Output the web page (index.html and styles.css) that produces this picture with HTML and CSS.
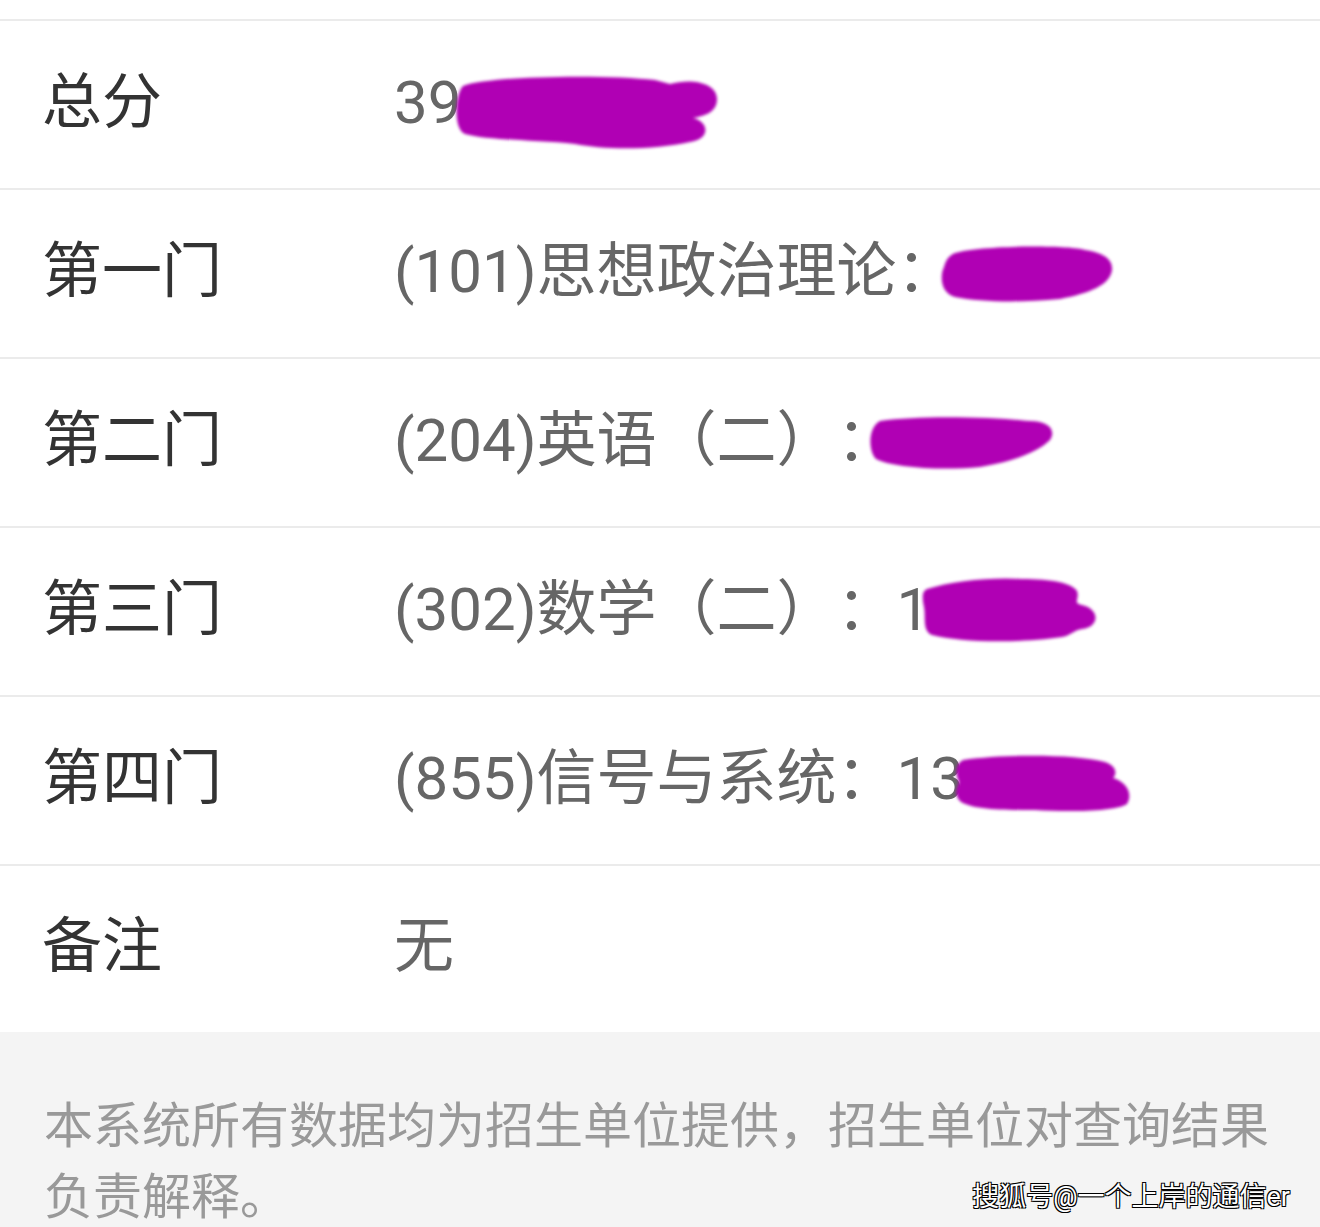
FILE: index.html
```html
<!DOCTYPE html>
<html lang="zh-CN">
<head>
  <meta charset="UTF-8">
  <meta name="viewport" content="width=device-width, initial-scale=1.0">
  <title>成绩查询结果</title>
  <link rel="stylesheet" href="styles.css">
</head>
<body>
  <div class="page">
    <div class="result-list">
      <div class="row">
        <span class="label">总分</span>
        <span class="value">39</span>
        <svg class="mask mask-1" viewBox="0 0 263 75"><path d="M8 12 C30 2 150 0 200 6 L215 10 C235 4 262 8 262 25 C262 38 250 42 238 44 C255 48 255 66 235 68 C200 76 150 76 120 70 C80 66 30 66 10 60 C-2 55 0 20 8 12 Z"/></svg>
      </div>
      <div class="row">
        <span class="label">第一门</span>
        <span class="value">(101)思想政治理论：</span>
        <svg class="mask mask-2" viewBox="0 0 173 57"><path d="M15 8 C40 0 130 0 145 5 C165 8 173 15 172 25 C170 40 150 48 120 54 C80 58 40 57 15 52 C0 48 0 30 4 22 C6 14 10 10 15 8 Z"/></svg>
      </div>
      <div class="row">
        <span class="label">第二门</span>
        <span class="value">(204)英语（二）：</span>
        <svg class="mask mask-3" viewBox="0 0 185 55"><path d="M10 6 C50 0 120 2 160 6 C180 6 186 16 180 25 C170 35 150 45 110 52 C70 56 20 52 6 44 C-2 36 -2 12 10 6 Z"/></svg>
      </div>
      <div class="row">
        <span class="label">第三门</span>
        <span class="value">(302)数学（二）：1</span>
        <svg class="mask mask-4" viewBox="0 0 176 65"><path d="M5 12 C30 4 70 0 100 2 C130 2 150 6 155 14 C158 22 150 26 160 28 C178 32 178 50 160 52 C150 54 150 58 140 60 C100 66 40 66 10 58 C0 54 4 40 2 30 C0 20 0 14 5 12 Z"/></svg>
      </div>
      <div class="row">
        <span class="label">第四门</span>
        <span class="value">(855)信号与系统：13</span>
        <svg class="mask mask-5" viewBox="0 0 175 58"><path d="M8 6 C50 0 120 0 150 8 C162 12 162 20 158 24 C172 28 178 40 172 50 C160 58 110 58 80 56 C50 56 20 56 6 48 C-2 40 2 34 4 28 C0 20 0 10 8 6 Z"/></svg>
      </div>
      <div class="row">
        <span class="label">备注</span>
        <span class="value">无</span>
      </div>
    </div>

    <div class="notice">
      本系统所有数据均为招生单位提供，招生单位对查询结果负责解释。
    </div>

    <div class="watermark">搜狐号@一个上岸的通信er</div>
  </div>
</body>
</html>
```

FILE: styles.css
```css
/***----BASIC----***/
body {
  margin: 0;
  background: #f4f4f4;
  font-family: 'Roboto', 'Noto Sans CJK SC', sans-serif;
  text-spacing-trim: space-all;
  overflow: hidden;
}
.page {
  position: relative;
  height: 1227px;
  overflow: hidden;
}

/***----Result List----***/
.result-list {
  background: #fff;
  padding-top: 19px;
}
.row {
  position: relative;
  display: flex;
  align-items: center;
  height: 163px;
  padding: 0 0 4px 42px;
  border-top: 2px solid #ebebeb;
}
.row:last-child {
  height: 162px;
}
.label {
  width: 352px;
  flex-shrink: 0;
  font-size: 60px;
  line-height: 1.2;
  color: #333;
}
.value {
  font-size: 60px;
  line-height: 1.2;
  color: #666;
  white-space: pre;
}

/* 遮挡涂抹 */
.mask {
  position: absolute;
  fill: #b000b4;
  filter: blur(1.5px);
}
.mask-1 { left: 455px; top: 53px; width: 263px; height: 75px; }
.mask-2 { left: 940px; top: 55px; width: 173px; height: 57px; }
.mask-3 { left: 870px; top: 56px; width: 185px; height: 55px; }
.mask-4 { left: 922px; top: 49px; width: 176px; height: 65px; }
.mask-5 { left: 955px; top: 57px; width: 175px; height: 58px; }

/***----Notice----***/
.notice {
  padding: 59px 40px 0 44px;
  font-size: 49px;
  line-height: 71px;
  color: #999;
}

/* 水印 */
.watermark {
  position: absolute;
  right: 30px;
  bottom: 13px;
  font-size: 27px;
  color: #fff;
  text-shadow: 1px 1px 0 #000, -1px -1px 0 #000, 1px -1px 0 #000, -1px 1px 0 #000;
}
```
